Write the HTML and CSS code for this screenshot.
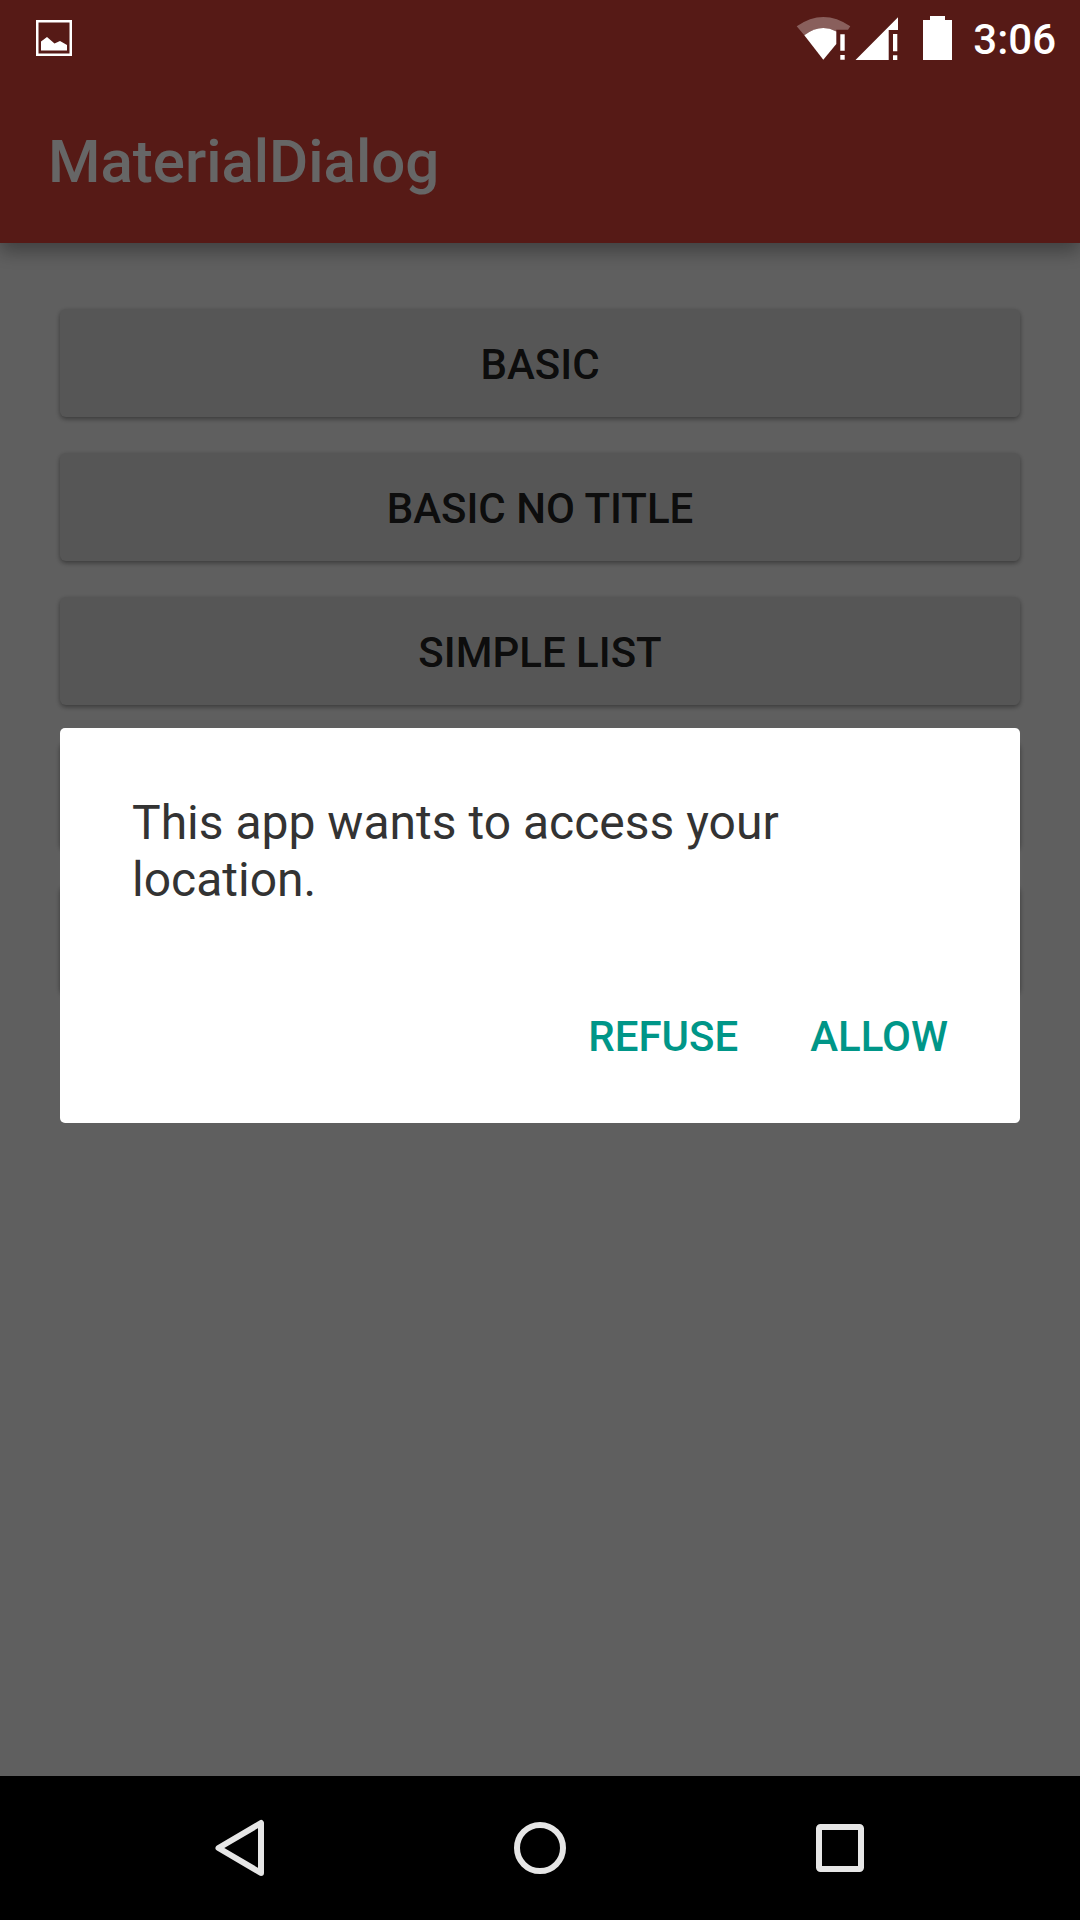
FILE: index.html
```html
<!DOCTYPE html>
<html lang="en">
<head>
<meta charset="utf-8">
<meta name="viewport" content="width=device-width, initial-scale=1">
<title>MaterialDialog</title>
<link rel="stylesheet" href="styles.css">
</head>
<body>
<div class="screen">
  <div class="status-bar">
    <svg class="status-photo" width="36" height="36" viewBox="0 0 36 36" aria-hidden="true">
      <rect x="1.25" y="1.25" width="33.5" height="33.5" fill="none" stroke="#fff" stroke-width="2.5"/>
      <path fill="#fff" d="M5 30.500V21.500L11 17L18.500 23.500L24 21L31 25V30.500Z"/>
    </svg>
    <svg class="status-wifi" width="55" height="44" viewBox="0 0 55 44" aria-hidden="true">
      <path fill="#fff" fill-opacity=".3" d="M.7 10.300Q27.300 -8.300 54.300 10.300L52 13.700H40.300V15.400Q24.300 7 8.300 19.300Z"/>
      <path fill="#fff" d="M8.300 19.300Q24.300 7 40.300 15.400V28L27.300 43.700Z"/>
      <path fill="#fff" d="M44.300 18.300H48.700V34.700H44.300ZM44.300 39H48.700V43.700H44.300Z"/>
    </svg>
    <svg class="status-signal" width="43" height="44" viewBox="0 0 43 44" aria-hidden="true">
      <path fill="#fff" d="M.5 44L43 1.300V14H33.700V44Z"/>
      <path fill="#fff" d="M38 18H42.300V35.300H38ZM38 39.300H42.300V44H38Z"/>
    </svg>
    <svg class="status-battery" width="29" height="44" viewBox="0 0 29 44" aria-hidden="true">
      <path fill="#fff" d="M7 0H22V4H29V44H0V4H7Z"/>
    </svg>
    <time class="clock">3:06</time>
  </div>

  <div class="app">
    <header class="app-bar">
      <h1 class="app-title">MaterialDialog</h1>
    </header>
    <main class="demos">
      <button class="demo-button" type="button">BASIC</button>
      <button class="demo-button" type="button">BASIC NO TITLE</button>
      <button class="demo-button" type="button">SIMPLE LIST</button>
      <button class="demo-button" type="button" aria-label="Custom view"></button>
      <button class="demo-button" type="button" aria-label="Long content"></button>
    </main>
  </div>

  <div class="scrim">
    <section class="dialog" role="dialog" aria-modal="true" aria-describedby="message">
      <p class="message" id="message">This app wants to access your location.</p>
      <div class="actions">
        <button class="action" type="button">REFUSE</button>
        <button class="action" type="button">ALLOW</button>
      </div>
    </section>
  </div>

  <nav class="nav-bar" aria-label="System">
    <button class="nav-button" type="button" aria-label="Back">
      <svg width="60" height="60" viewBox="0 0 60 60"><path d="M51 5V55L8.500 30Z"/></svg>
    </button>
    <button class="nav-button" type="button" aria-label="Home">
      <svg width="60" height="60" viewBox="0 0 60 60"><circle cx="30" cy="30" r="23"/></svg>
    </button>
    <button class="nav-button" type="button" aria-label="Recent apps">
      <svg width="60" height="60" viewBox="0 0 60 60"><rect x="9" y="9" width="42" height="42" rx="1.500"/></svg>
    </button>
  </nav>
</div>
</body>
</html>
```
FILE: styles.css
```css
* {
  box-sizing: border-box;
}

body {
  margin: 0;
  background: #000;
  font-family: Roboto, "Noto Sans", sans-serif;
}

button {
  border: 0;
  margin: 0;
  font: inherit;
  cursor: pointer;
}

.screen {
  display: grid;
  grid-template-rows: 72px 1fr 144px;
  grid-template-columns: 1fr;
  min-height: 100vh;
}

/* System status bar, drawn above the scrim */
.status-bar {
  grid-area: 1 / 1;
  z-index: 2;
  display: flex;
  align-items: center;
  padding: 3px 24px 0 36px;
}

.status-photo {
  margin-right: auto;
}

.status-wifi {
  margin-right: 4px;
}

.status-signal {
  margin-right: 25px;
}

.status-battery {
  margin-right: 21px;
}

.clock {
  padding-top: 4px;
  color: #fff;
  font-size: 42px;
  font-weight: 500;
  line-height: 48px;
}

/* Application under the dialog */
.app {
  grid-area: 1 / 1 / 3 / 2;
  background: #eee;
}

.app-bar {
  padding: 80px 48px 0;
  height: 243px;
  display: flex;
  align-items: center;
  background: #d74137;
  box-shadow: 0 8px 18px rgba(0, 0, 0, .34);
}

.app-title {
  margin: 0;
  color: #fff;
  font-size: 60px;
  font-weight: 500;
  line-height: 72px;
}

.demos {
  display: flex;
  flex-direction: column;
  gap: 36px;
  padding: 66px 60px;
}

.demo-button {
  height: 108px;
  padding: 3px 24px 0;
  border-radius: 6px;
  background: #d7d7d7;
  box-shadow: 0 2px 5px rgba(0, 0, 0, .4);
  color: rgba(0, 0, 0, .87);
  font-size: 42px;
  font-weight: 500;
}

/* Modal dialog */
.scrim {
  grid-area: 1 / 1 / 3 / 2;
  z-index: 1;
  display: flex;
  flex-direction: column;
  justify-content: center;
  padding: 75px 60px 0;
  background: rgba(0, 0, 0, .6);
}

.dialog {
  padding: 66px 0 33px;
  border-radius: 5px;
  background: #fff;
}

.message {
  margin: 0;
  padding: 0 72px;
  color: #333;
  font-size: 48px;
  line-height: 57px;
}

.actions {
  display: flex;
  justify-content: flex-end;
  gap: 24px;
  margin-top: 74px;
  padding: 0 48px;
}

.action {
  height: 108px;
  padding: 0 24px;
  background: none;
  color: #009688;
  font-size: 42px;
  font-weight: 500;
}

/* System navigation bar */
.nav-bar {
  grid-area: 3 / 1;
  display: flex;
  justify-content: center;
  gap: 60px;
  background: #000;
}

.nav-button {
  display: flex;
  align-items: center;
  justify-content: center;
  width: 240px;
  padding: 0;
  background: none;
}

.nav-button svg {
  fill: none;
  stroke: #e6e6e6;
  stroke-width: 6;
  stroke-linejoin: round;
}
```
